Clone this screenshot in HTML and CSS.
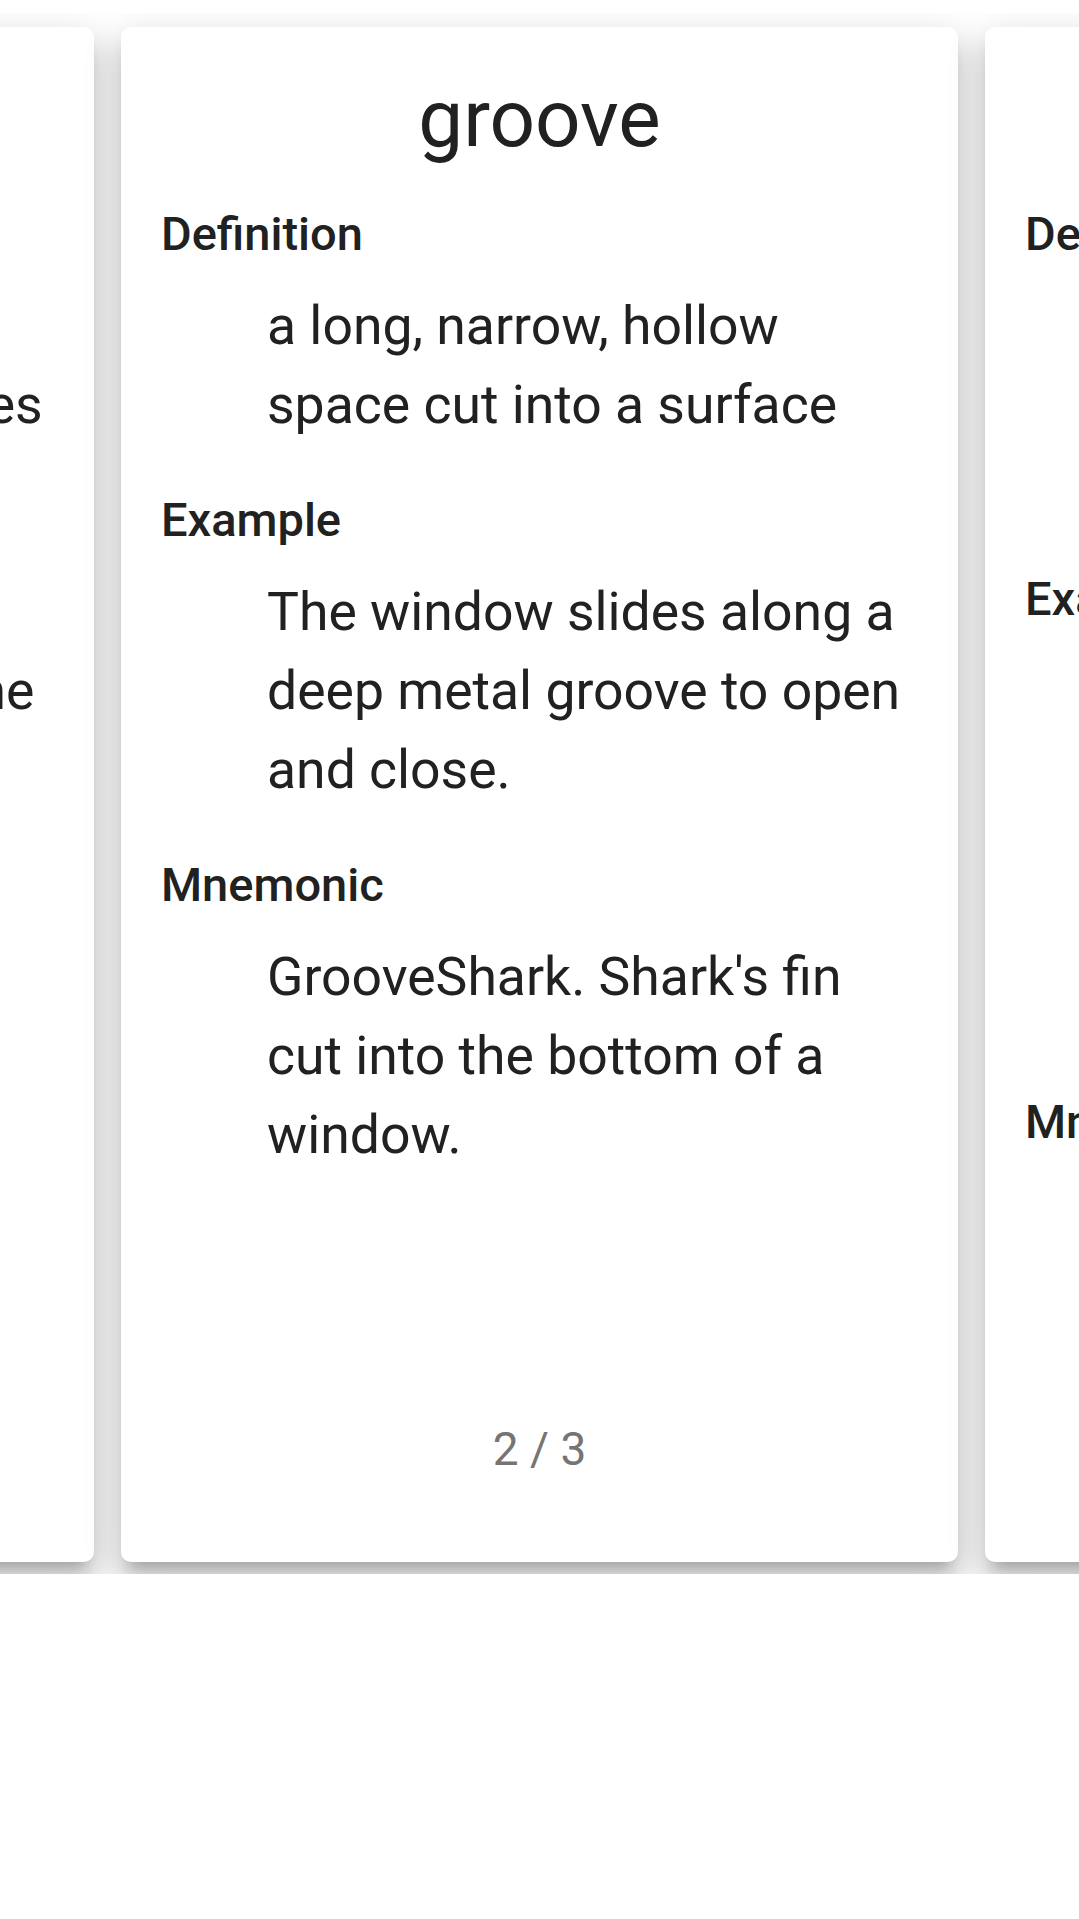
FILE: index.html
```html
<!DOCTYPE html>
<html lang="en">
<head>
<meta charset="utf-8">
<title>Flashcards</title>
<link rel="stylesheet" href="styles.css">
</head>
<body>
<main class="carousel">
  <article class="card">
    <h1 class="word">furrow</h1>
    <dl class="details">
      <dt>Definition</dt>
      <dd>a trench plowed in the ground; or deep facial lines</dd>
      <dt>Example</dt>
      <dd>The farmer cut a neat furrow along the fence line with his old plow.</dd>
      <dt>Mnemonic</dt>
      <dd>Fur rows in the dirt.</dd>
    </dl>
    <div class="counter">1 / 3</div>
  </article>
  <article class="card">
    <h1 class="word">groove</h1>
    <dl class="details">
      <dt>Definition</dt>
      <dd>a long, narrow, hollow space cut into a surface</dd>
      <dt>Example</dt>
      <dd>The window slides along a deep metal groove to open and close.</dd>
      <dt>Mnemonic</dt>
      <dd>GrooveShark. Shark's fin cut into the bottom of a window.</dd>
    </dl>
    <div class="counter">2 / 3</div>
  </article>
  <article class="card">
    <h1 class="word">rut</h1>
    <dl class="details">
      <dt>Definition</dt>
      <dd>a long deep track made by the repeated passage of wheels over mud</dd>
      <dt>Example</dt>
      <dd>The old cart road was full of deep ruts, and every spring the melting snow turned them into long, muddy channels.</dd>
      <dt>Mnemonic</dt>
      <dd>Stuck in a rut: the wheel keeps dropping into the same groove.</dd>
    </dl>
    <div class="counter">3 / 3</div>
  </article>
</main>
</body>
</html>
```
FILE: styles.css
```css
html, body {
  margin: 0;
  background: #ffffff;
}

body {
  padding-top: 13px;
  font-family: Roboto, "Noto Sans", "Liberation Sans", sans-serif;
  color: #212121;
}

.carousel {
  display: flex;
  justify-content: center;
  gap: 27px;
  overflow: hidden;
  padding: 14px 0 12px;
}

.card {
  flex: 0 0 837px;
  height: 1535px;
  box-sizing: border-box;
  display: flex;
  flex-direction: column;
  padding: 46px 40px 86px;
  background: #ffffff;
  border-radius: 10px;
  box-shadow: 0 13px 13px -8px rgba(0, 0, 0, 0.2),
              0 21px 27px 3px rgba(0, 0, 0, 0.14),
              0 8px 37px 5px rgba(0, 0, 0, 0.1);
}

.word {
  margin: 0 0 40px;
  font-size: 80px;
  font-weight: 400;
  line-height: 93.75px;
  text-align: center;
}

.details {
  margin: 0;
}

.details dt {
  margin: 0 0 25px;
  font-size: 47px;
  font-weight: 500;
  line-height: 54px;
}

.details dd {
  margin: 0 0 49px 106px;
  font-size: 53.5px;
  line-height: 79px;
}

.counter {
  margin-top: auto;
  font-size: 46px;
  line-height: 54px;
  color: #757575;
  text-align: center;
}
```
